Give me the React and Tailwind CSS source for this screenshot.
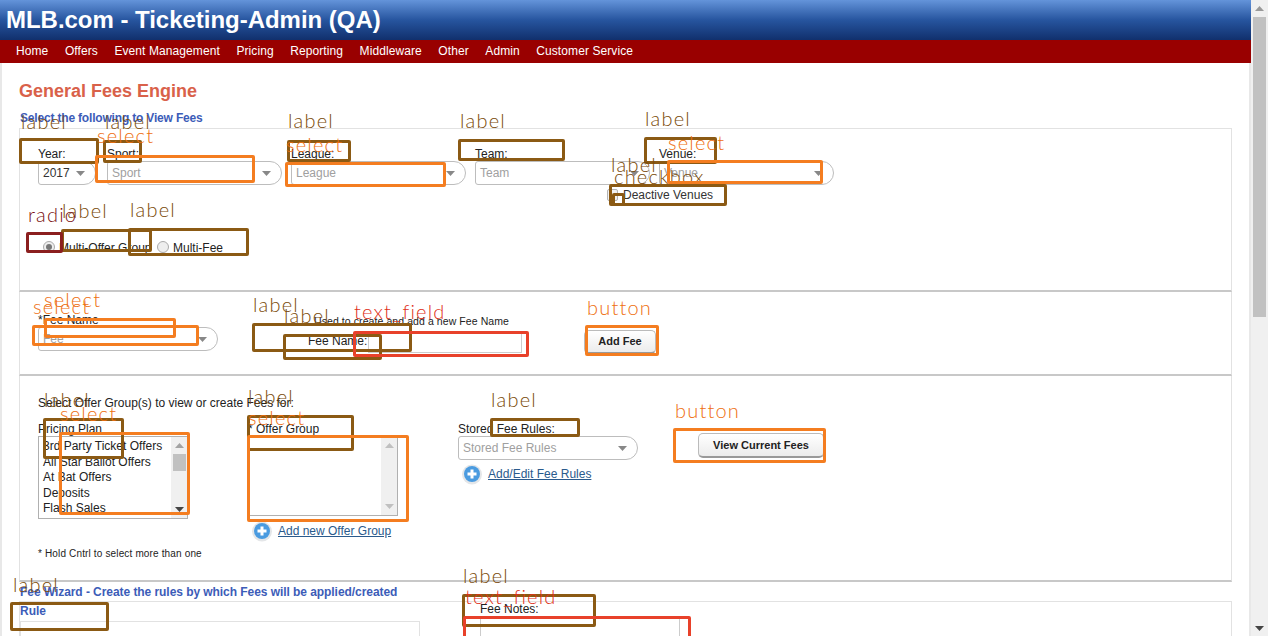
import React from 'react';

const marks = [
    // label boxes
    { kind: 'label', x: 19, y: 138, w: 79, h: 25, tx: 21, ty: 109 },
    { kind: 'label', x: 103, y: 140, w: 38, h: 22, tx: 105, ty: 109 },
    { kind: 'label', x: 287, y: 140, w: 63, h: 21, tx: 288, ty: 108 },
    { kind: 'label', x: 458, y: 139, w: 106, h: 21, tx: 460, ty: 108 },
    { kind: 'label', x: 644, y: 137, w: 72, h: 26, tx: 645, ty: 106 },
    { kind: 'label', x: 609, y: 184, w: 117, h: 21, tx: 611, ty: 152 },
    { kind: 'label', x: 612, y: 193, w: 12, h: 12, tx: 614, ty: 164, text: 'checkbox' },
    { kind: 'label', x: 61, y: 229, w: 90, h: 22, tx: 62, ty: 198 },
    { kind: 'label', x: 128, y: 228, w: 120, h: 27, tx: 130, ty: 197 },
    { kind: 'label', x: 252, y: 323, w: 159, h: 28, tx: 253, ty: 292 },
    { kind: 'label', x: 283, y: 334, w: 98, h: 25, tx: 284, ty: 303 },
    { kind: 'label', x: 43, y: 418, w: 80, h: 40, tx: 44, ty: 387 },
    { kind: 'label', x: 247, y: 415, w: 106, h: 35, tx: 248, ty: 384 },
    { kind: 'label', x: 490, y: 418, w: 89, h: 18, tx: 491, ty: 387 },
    { kind: 'label', x: 10, y: 602, w: 98, h: 28, tx: 13, ty: 572 },
    { kind: 'label', x: 462, y: 594, w: 133, h: 32, tx: 463, ty: 563 },
    // select boxes
    { kind: 'control', x: 95, y: 155, w: 159, h: 27, tx: 97, ty: 123, text: 'select' },
    { kind: 'control', x: 285, y: 162, w: 160, h: 24, tx: 286, ty: 132, text: 'select' },
    { kind: 'control', x: 667, y: 160, w: 155, h: 23, tx: 668, ty: 130, text: 'select' },
    { kind: 'control', x: 32, y: 325, w: 166, h: 20, tx: 33, ty: 294, text: 'select' },
    { kind: 'control', x: 44, y: 318, w: 131, h: 19, tx: 44, ty: 287, text: 'select' },
    { kind: 'control', x: 59, y: 432, w: 130, h: 82, tx: 60, ty: 401, text: 'select' },
    { kind: 'control', x: 247, y: 435, w: 161, h: 86, tx: 248, ty: 405, text: 'select' },
    // buttons
    { kind: 'control', x: 585, y: 325, w: 73, h: 30, tx: 587, ty: 295, text: 'button' },
    { kind: 'control', x: 673, y: 428, w: 152, h: 34, tx: 675, ty: 398, text: 'button' },
    // text fields
    { kind: 'field', x: 353, y: 331, w: 175, h: 25, tx: 354, ty: 299, text: 'text_field' },
    { kind: 'field', x: 463, y: 616, w: 227, h: 24, tx: 465, ty: 584, text: 'text_field' },
    // radio
    { kind: 'radio', x: 26, y: 232, w: 36, h: 20, tx: 28, ty: 202, text: 'radio' },
];

const markBox = {
    label: 'border-[#8b5a14]',
    control: 'border-[#f47d20]',
    field: 'border-[#e8412a]',
    radio: 'border-[#8b1f1f]',
};

const markText = {
    label: 'text-[#7a4a08]',
    control: 'text-[#ee6f10]',
    field: 'text-[#e03018]',
    radio: 'text-[#7a1010]',
};

const navItems = ['Home', 'Offers', 'Event Management', 'Pricing', 'Reporting', 'Middleware', 'Other', 'Admin', 'Customer Service'];
const plans = ['3rd Party Ticket Offers', 'All Star Ballot Offers', 'At Bat Offers', 'Deposits', 'Flash Sales'];

const Caret = ({ color = '#888' }) => (
    <svg width="9" height="5" viewBox="0 0 9 5" className="shrink-0">
        <path d="M0 0h9L4.5 5z" fill={color} />
    </svg>
);

const Select = ({ text, width, dark }) => (
    <div className={`${width} h-[24px] flex items-center justify-between pl-[4px] pr-[10px] bg-white border border-[#bdbdbd] rounded-l-[3px] rounded-r-[12px]`}>
        <span className={dark ? 'text-[#333]' : 'text-[#a0a0a0]'}>{text}</span>
        <Caret />
    </div>
);

const PlusIcon = () => (
    <svg width="22" height="22" viewBox="0 0 22 22" className="shrink-0">
        <circle cx="11" cy="11.5" r="10" fill="#e4e6e8" />
        <circle cx="11" cy="11" r="8" fill="#4a9be0" />
        <path d="M11 6.5v9M6.5 11h9" stroke="#fff" strokeWidth="3" />
    </svg>
);

const ListScroll = ({ thumb }) => (
    <div className="w-[16px] bg-[#f0f0f0] flex flex-col items-center justify-between py-[6px]">
        <svg width="9" height="5" viewBox="0 0 9 5"><path d="M0 5h9L4.5 0z" fill={thumb ? '#a3a3a3' : '#c0c0c0'} /></svg>
        {thumb && <div className="absolute top-[17px] w-[13px] h-[17px] bg-[#c1c1c1]" />}
        <Caret color={thumb ? '#444' : '#c0c0c0'} />
    </div>
);

const App = () => {
    return (
        <div className="relative w-[1268px] h-[636px] flex overflow-hidden bg-white text-[12px] text-[#222] font-['Liberation_Sans',Arial,sans-serif]">
            <div className="w-[1251px] shrink-0">
                <header className="h-[40px] px-[6px] flex items-center bg-gradient-to-b from-[#6494da] via-[#27559f] to-[#11306d]">
                    <h1 className="text-[24px] font-bold tracking-[-0.03px] text-white">MLB.com - Ticketing-Admin (QA)</h1>
                </header>
                <nav className="h-[23px] pl-[16px] pb-[2px] flex items-center gap-[16.5px] tracking-[0.09px] bg-[#990000] text-white">
                    {navItems.map((item) => (
                        <span key={item}>{item}</span>
                    ))}
                </nav>

                <main className="h-[573px] border-x-2 border-[#e8e8e8] pl-[17px] pr-[17px] pt-[18px]">
                    <h2 className="text-[18px] leading-[20px] font-bold text-[#d9614a]">General Fees Engine</h2>
                    <p className="mt-[10px] ml-px leading-[14px] font-bold tracking-[-0.18px] text-[#3c5cb8]">Select the following to View Fees</p>

                    <section className="mt-[3px] h-[164px] border border-[#e2e2e2] border-b-2 border-b-[#c8c8c8] pl-[18px]">
                        <div className="flex gap-[9px] pt-[16px]">
                            <div className="w-[60px]">
                                <div className="h-[16px]">Year:</div>
                                <Select text="2017" width="w-[58px]" dark />
                            </div>
                            <div>
                                <div className="h-[16px]">Sport:</div>
                                <Select text="Sport" width="w-[175px]" />
                            </div>
                            <div>
                                <div className="h-[16px]">League:</div>
                                <Select text="League" width="w-[175px]" />
                            </div>
                            <div>
                                <div className="h-[16px]">Team:</div>
                                <Select text="Team" width="w-[175px]" />
                            </div>
                            <div>
                                <div className="h-[16px]">Venue:</div>
                                <Select text="Venue" width="w-[175px]" />
                            </div>
                        </div>
                        <label className="mt-[3px] ml-[569px] h-[14px] flex items-center gap-[5px] text-[#333]">
                            <span className="w-[11px] h-[12px] rounded-[2px] border border-[#b4b4b4] bg-[#f2f2f2]" />
                            Deactive Venues
                        </label>
                        <div className="mt-[34px] ml-[5px] flex items-center">
                            <span className="w-[12px] h-[12px] rounded-full border border-[#aaa] bg-[#eee] flex items-center justify-center">
                                <span className="w-[6px] h-[6px] rounded-full bg-[#777]" />
                            </span>
                            <span className="ml-[4px] mt-[3px] w-[98px] whitespace-nowrap">Multi-Offer Group</span>
                            <span className="w-[12px] h-[12px] rounded-full border border-[#aaa] bg-[#eee]" />
                            <span className="ml-[4px] mt-[3px]">Multi-Fee</span>
                        </div>
                    </section>

                    <section className="h-[84px] border-x border-[#e2e2e2] border-b-2 border-b-[#c8c8c8] pl-[18px] flex">
                        <div className="w-[270px] shrink-0 pt-[21px]">
                            <div className="h-[14px] leading-[14px]">*Fee Name</div>
                            <Select text="Fee" width="w-[180px]" />
                        </div>
                        <div className="w-[60px] pt-[40px] shrink-0 whitespace-nowrap">Fee Name:</div>
                        <div className="w-[216px] pt-[22px] shrink-0">
                            <div className="-ml-[54px] h-[17px] text-[10.5px] tracking-[0.08px] whitespace-nowrap">Used to create and add a new Fee Name</div>
                            <div className="w-[154px] h-[22px] border border-[#ccc]" />
                        </div>
                        <div className="pt-[38px]">
                            <button className="w-[72px] h-[24px] border border-[#bbb] border-b-2 border-b-[#999] rounded-[5px] bg-gradient-to-b from-white to-[#ececec] text-[11px] font-bold">Add Fee</button>
                        </div>
                    </section>

                    <section className="h-[206px] border-x border-[#e2e2e2] border-b-2 border-b-[#c8c8c8] pl-[18px] pt-[20px]">
                        <p className="leading-[14px]">Select Offer Group(s) to view or create Fees for:</p>
                        <div className="mt-[12px] flex">
                            <div className="w-[210px]">
                                <div className="h-[14px] leading-[14px]">Pricing Plan</div>
                                <div className="relative w-[150px] h-[83px] border border-[#b0b0b0] flex overflow-hidden">
                                    <ul className="flex-1 pl-[4px] pt-[2px] leading-[15.5px]">
                                        {plans.map((plan) => (
                                            <li key={plan}>{plan}</li>
                                        ))}
                                    </ul>
                                    <ListScroll thumb />
                                </div>
                            </div>
                            <div className="w-[210px]">
                                <div className="h-[14px] leading-[14px]">* Offer Group</div>
                                <div className="relative w-[150px] h-[80px] border border-[#b0b0b0] flex justify-end">
                                    <ListScroll />
                                </div>
                                <a href="#" className="mt-[4px] ml-[3px] flex items-center gap-[5px] text-[#2a5a8c] underline">
                                    <PlusIcon />
                                    Add new Offer Group
                                </a>
                            </div>
                            <div className="w-[240px]">
                                <div className="h-[14px] leading-[14px]">Stored Fee Rules:</div>
                                <Select text="Stored Fee Rules" width="w-[180px]" />
                                <a href="#" className="mt-[3px] ml-[3px] flex items-center gap-[5px] text-[#2a5a8c] underline">
                                    <PlusIcon />
                                    Add/Edit Fee Rules
                                </a>
                            </div>
                            <div className="pt-[11px]">
                                <button className="w-[126px] h-[25px] border border-[#bbb] border-b-2 border-b-[#999] rounded-[5px] bg-gradient-to-b from-white to-[#ececec] text-[11px] font-bold">View Current Fees</button>
                            </div>
                        </div>
                        <p className="mt-[6px] text-[10px] tracking-[0.15px] leading-[12px]">* Hold Cntrl to select more than one</p>
                    </section>

                    <p className="mt-[3px] ml-px leading-[14px] font-bold tracking-[-0.06px] text-[#3c5cb8]">Fee Wizard - Create the rules by which Fees will be applied/created</p>
                    <section className="mt-[2px] h-[60px] border border-[#e2e2e2] flex">
                        <div className="w-[400px] shrink-0">
                            <p className="mt-[2px] leading-[14px] font-bold text-[#3c5cb8]">Rule</p>
                            <div className="mt-[3px] w-[400px] h-[40px] border border-[#e2e2e2]" />
                        </div>
                        <div className="ml-[60px]">
                            <div className="h-[15px] leading-[14px]">Fee Notes:</div>
                            <div className="w-[200px] h-[40px] border border-[#ccc] rounded-[2px]" />
                        </div>
                    </section>
                </main>
            </div>

            <div className="flex-1 bg-[#f0f0f0] flex flex-col items-center justify-between pb-[5px]">
                <div className="w-full flex flex-col items-center">
                    <div className="h-[17px] flex items-center">
                        <svg width="9" height="5" viewBox="0 0 9 5"><path d="M0 5h9L4.5 0z" fill="#999" /></svg>
                    </div>
                    <div className="w-[13px] h-[300px] bg-[#c1c1c1]" />
                </div>
                <Caret color="#444" />
            </div>

            {marks.map((m, i) => (
                <React.Fragment key={i}>
                    <div
                        className={`absolute border-[3px] rounded-[2px] ${markBox[m.kind]}`}
                        style={{ left: m.x, top: m.y, width: m.w + 1, height: m.h + 1 }}
                    />
                    <span
                        className={`absolute text-[20px] leading-[24px] font-light tracking-[1.2px] font-['Lato',sans-serif] ${markText[m.kind]}`}
                        style={{ left: m.tx, top: m.ty }}
                    >
                        {m.text || 'label'}
                    </span>
                </React.Fragment>
            ))}
        </div>
    );
};

export default App;
